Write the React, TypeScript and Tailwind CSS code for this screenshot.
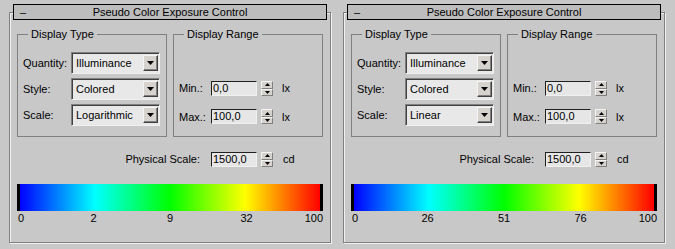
import React from "react";

const font = { fontFamily: '"Liberation Sans", Arial, sans-serif' };

function Arrow({ up = false }: { up?: boolean }) {
  return (
    <svg width="5" height="3" viewBox="0 0 5 3" className="block">
      {up ? <polygon points="0,3 5,3 2.5,0" fill="#000" /> : <polygon points="0,0 5,0 2.5,3" fill="#000" />}
    </svg>
  );
}

function Dropdown({ value }: { value: string }) {
  return (
    <div className="w-[89px] h-[22px] border border-t-[#808080] border-l-[#808080] border-b-[#f0f0f0] border-r-[#f0f0f0] shadow-[inset_1px_1px_0_#404040] bg-[#e8e8e8] flex items-center justify-between pl-[4px] pr-[1px]">
      <span className="leading-[13px] pt-[1px]">{value}</span>
      <div className="w-[15px] h-[16px] bg-[#d6d3ce] border border-t-[#f4f4f4] border-l-[#f4f4f4] border-b-[#404040] border-r-[#404040] shadow-[inset_-1px_-1px_0_#808080] flex items-center justify-center">
        <svg width="7" height="4" viewBox="0 0 7 4" className="block">
          <polygon points="0,0 7,0 3.5,4" fill="#000" />
        </svg>
      </div>
    </div>
  );
}

function Spinner() {
  return (
    <div className="w-[12px] h-[15px] flex flex-col">
      <div className="h-[8px] bg-[#d6d3ce] border border-t-[#f4f4f4] border-l-[#f4f4f4] border-b-[#808080] border-r-[#808080] flex items-center justify-center">
        <Arrow up />
      </div>
      <div className="h-[7px] bg-[#d6d3ce] border border-t-[#f4f4f4] border-l-[#f4f4f4] border-b-[#808080] border-r-[#808080] flex items-center justify-center">
        <Arrow />
      </div>
    </div>
  );
}

function NumInput({ value }: { value: string }) {
  return (
    <div className="w-[46px] h-[15px] bg-[#e6e6e6] border border-t-[#202020] border-l-[#202020] border-b-[#f0f0f0] border-r-[#f0f0f0] flex items-center pl-[1px]">
      <span className="leading-[13px]">{value}</span>
    </div>
  );
}

function Panel({ scale, labels }: { scale: string; labels: string[] }) {
  return (
    <div className="w-[322px] flex flex-col pt-[4px]">
      <div className="relative z-10 mx-[4px] h-[16px] border border-black bg-[#bdbdbd] grid grid-cols-[1fr_auto_1fr] items-center leading-[13px]">
        <span className="pl-[6px]">–</span>
        <span>Pseudo Color Exposure Control</span>
        <span />
      </div>
      <div className="-mt-[8px] h-[231px] border border-[#808080] shadow-[inset_1px_1px_0_#f0f0f0,1px_1px_0_#f0f0f0] px-[7px] pt-[15px]">
        <div className="flex gap-[6px]">
          <fieldset className="w-[150px] h-[109px] border border-[#808080] pl-[5px] pr-[6px]">
            <legend className="ml-[5px] px-[3px] leading-[13px]">Display Type</legend>
            <div className="flex flex-col gap-[4px] mt-[11px]">
              {[
                ["Quantity:", "Illuminance"],
                ["Style:", "Colored"],
                ["Scale:", scale],
              ].map(([l, v]) => (
                <div key={l} className="flex items-center justify-between">
                  <span>{l}</span>
                  <Dropdown value={v} />
                </div>
              ))}
            </div>
          </fieldset>
          <fieldset className="w-[150px] h-[109px] border border-[#808080] pl-[5px]">
            <legend className="ml-[5px] px-[3px] leading-[13px]">Display Range</legend>
            <div className="flex flex-col gap-[12px] mt-[39px]">
              {[
                ["Min.:", "0,0"],
                ["Max.:", "100,0"],
              ].map(([l, v]) => (
                <div key={l} className="flex items-center">
                  <span className="w-[32px]">{l}</span>
                  <NumInput value={v} />
                  <div className="ml-[4px]">
                    <Spinner />
                  </div>
                  <span className="ml-[9px]">lx</span>
                </div>
              ))}
            </div>
          </fieldset>
        </div>
        <div className="flex items-center mt-[14px]">
          <span className="w-[194px] text-right pr-[11px]">Physical Scale:</span>
          <NumInput value="1500,0" />
          <div className="ml-[4px]">
            <Spinner />
          </div>
          <span className="ml-[10px]">cd</span>
        </div>
        <div className="mt-[16px] w-[306px] h-[27px] flex">
          <div className="w-[3px] bg-black" />
          <div className="flex-1 bg-[linear-gradient(to_right,#0000ff_0%,#00ffff_25%,#00ff00_50%,#ffff00_75%,#ff0000_100%)]" />
          <div className="w-[3px] bg-black" />
        </div>
        <div className="w-[306px] grid grid-cols-[1fr_2fr_2fr_2fr_1fr] leading-[13px] mt-[1px]">
          <span className="text-left pl-[1px]">{labels[0]}</span>
          <span className="text-center">{labels[1]}</span>
          <span className="text-center">{labels[2]}</span>
          <span className="text-center">{labels[3]}</span>
          <span className="text-right">{labels[4]}</span>
        </div>
      </div>
    </div>
  );
}

export default function App() {
  return (
    <div className="w-[675px] h-[249px] bg-[#c8c8c8] text-[11px] text-black flex gap-[12px] pl-[9px]" style={font}>
      <Panel scale="Logarithmic" labels={["0", "2", "9", "32", "100"]} />
      <Panel scale="Linear" labels={["0", "26", "51", "76", "100"]} />
    </div>
  );
}
